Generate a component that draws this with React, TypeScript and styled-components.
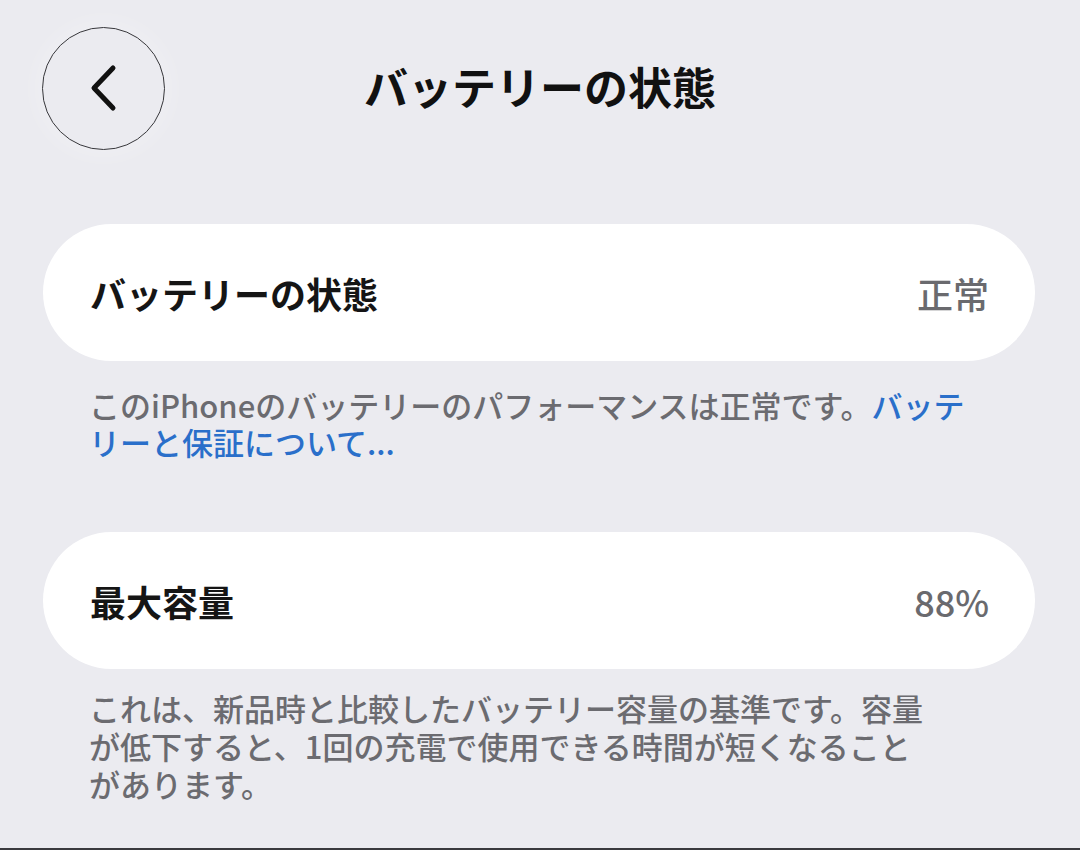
import React from "react";
import styled, { createGlobalStyle } from "styled-components";

const GlobalStyle = createGlobalStyle`
  html, body {
    margin: 0;
    padding: 0;
    background: #ebebf0;
  }
  * {
    box-sizing: border-box;
  }
`;

const Page = styled.div`
  width: 1080px;
  height: 850px;
  background: #ebebf0;
  border-bottom: 2px solid #3a3a3e;
  font-family: "Noto Sans CJK JP", "Noto Sans", sans-serif;
  overflow: hidden;
`;

const Header = styled.div`
  display: grid;
  grid-template-columns: 1fr auto 1fr;
  align-items: center;
  padding: 26px 42px 0 42px;
  height: 150px;
`;

const BackButton = styled.div`
  width: 123px;
  height: 123px;
  border-radius: 50%;
  border: 1.8px solid #38383c;
  display: flex;
  align-items: center;
  justify-content: center;
  box-shadow: 0 0 30px rgba(255, 255, 255, 0.35);
`;

const Title = styled.div`
  font-size: 44px;
  font-weight: 700;
  color: #111;
  margin-top: -4px;
`;

const Card = styled.div<{ $gap: number }>`
  margin: ${(p) => p.$gap}px 45px 0 43px;
  height: 137px;
  border-radius: 69px;
  background: #fff;
  display: flex;
  align-items: center;
  justify-content: space-between;
  padding: 0 46px 0 47px;
`;

const Label = styled.div`
  font-size: 36px;
  font-weight: 700;
  color: #151515;
`;

const Value = styled.div`
  font-size: 36px;
  font-weight: 500;
  color: #6a6a6e;
`;

const Note = styled.p<{ $gap: number; $lh: number }>`
  margin: ${(p) => p.$gap}px 0 0 0;
  padding: 0 60px 0 89px;
  font-size: 31px;
  line-height: ${(p) => p.$lh}px;
  font-weight: 500;
  color: #6b6b70;
`;

const Link = styled.span`
  color: #2a6fca;
`;

export default function App() {
  return (
    <>
      <GlobalStyle />
      <Page>
        <Header>
          <BackButton>
            <svg width="36" height="52" viewBox="0 0 36 52">
              <path
                d="M27 6 L8 26 L27 46"
                fill="none"
                stroke="#111"
                strokeWidth="5"
                strokeLinecap="round"
                strokeLinejoin="round"
              />
            </svg>
          </BackButton>
          <Title>バッテリーの状態</Title>
          <div />
        </Header>
        <Card $gap={74}>
          <Label>バッテリーの状態</Label>
          <Value>正常</Value>
        </Card>
        <Note $gap={25} $lh={37}>
          このiPhoneのバッテリーのパフォーマンスは正常です。<Link>バッテ<br />リーと保証について...</Link>
        </Note>
        <Card $gap={72}>
          <Label>最大容量</Label>
          <Value>88%</Value>
        </Card>
        <Note $gap={20} $lh={38}>
          これは、新品時と比較したバッテリー容量の基準です。容量<br />
          が低下すると、1回の充電で使用できる時間が短くなること<br />
          があります。
        </Note>
      </Page>
    </>
  );
}
